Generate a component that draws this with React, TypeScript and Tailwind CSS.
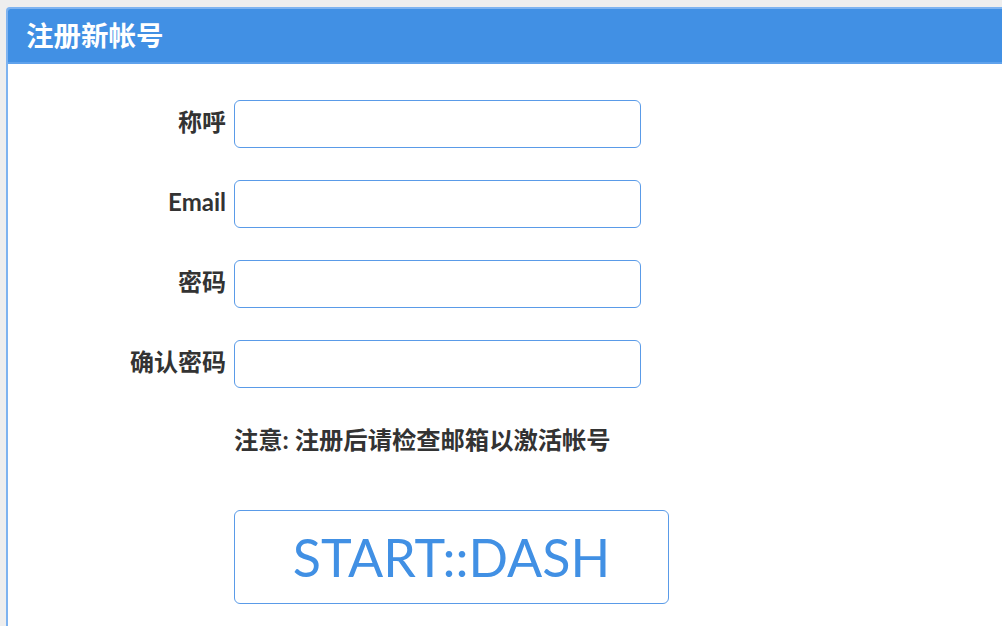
import { useState } from 'react';

const fields = [
  { name: 'nickname', label: '称呼', type: 'text' },
  { name: 'email', label: 'Email', type: 'email' },
  { name: 'password', label: '密码', type: 'password' },
  { name: 'confirm', label: '确认密码', type: 'password' },
];

const App = () => {
  const [values, setValues] = useState<Record<string, string>>({});

  return (
    <div
      className="min-h-[626px] bg-[#eeeeee] pt-[7px] pl-[6px] overflow-hidden"
      style={{ fontFamily: 'Lato, "Noto Sans CJK SC", sans-serif' }}
    >
      <div className="min-h-[619px] w-[1010px] bg-white border-2 border-r-0 border-b-0 border-[#7eb3f0] rounded-t-[4px] overflow-hidden">
        {/* Panel heading */}
        <div className="h-[55px] bg-[#4190e4] border-b-2 border-[#5fa2ec] flex items-center pl-[18px]">
          <h2 className="text-white text-[27.5px] font-bold leading-none">注册新帐号</h2>
        </div>

        <form className="pt-[36px]" onSubmit={(e) => e.preventDefault()}>
          <div className="flex flex-col gap-[32px]">
            {fields.map((f) => (
              <div key={f.name} className="flex items-center">
                <label className="w-[226px] pr-[8px] pb-[4px] text-right text-[24px] leading-[30px] font-bold text-[#333333]">
                  {f.label}
                </label>
                <input
                  type={f.type}
                  value={values[f.name] ?? ''}
                  onChange={(e) => setValues({ ...values, [f.name]: e.target.value })}
                  className="w-[407px] h-[48px] border border-[#5a9be8] rounded-[6px] px-3 text-[18px] outline-none"
                />
              </div>
            ))}
          </div>

          <p className="ml-[226px] mt-[37px] text-[24.3px] leading-[30px] font-bold text-[#333333]">
            注意: 注册后请检查邮箱以激活帐号
          </p>

          <button
            type="submit"
            className="ml-[226px] mt-[55px] w-[435px] h-[94px] border border-[#5a9be8] rounded-[6px] bg-white text-[#4190e4] text-[52px] leading-none"
          >
            START::DASH
          </button>
        </form>
      </div>
    </div>
  );
};

export default App;
